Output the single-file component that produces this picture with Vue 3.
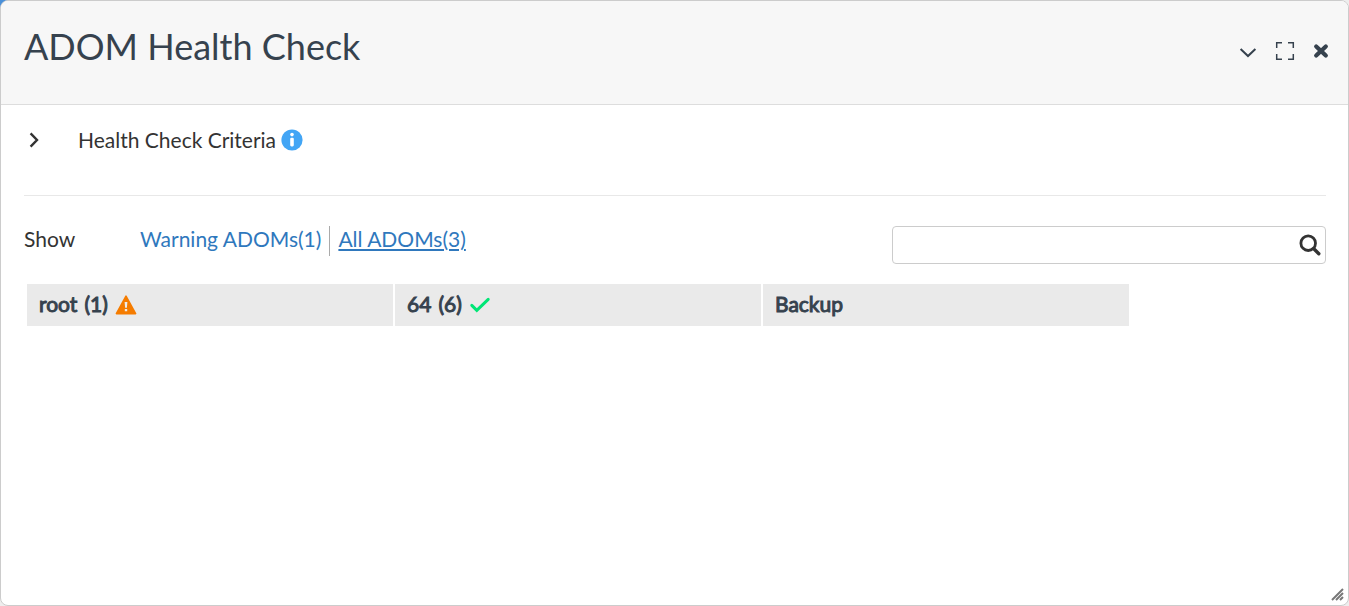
<script setup>
import { ref } from 'vue'

const query = ref('')
const adoms = [
  { name: 'root', count: 1, status: 'warning' },
  { name: '64', count: 6, status: 'ok' },
  { name: 'Backup', count: null, status: null },
]
</script>

<template>
  <div class="backdrop">
    <section class="dialog" aria-labelledby="dialog-title">
      <header class="header">
        <h1 id="dialog-title" class="title">ADOM Health Check</h1>
        <div class="actions">
          <button type="button" class="icon-button" aria-label="Collapse">
            <svg width="18" height="20" viewBox="0 0 18 20" fill="none" stroke="currentColor" stroke-width="2">
              <path d="M1.600 8 9 15l7.400-7" />
            </svg>
          </button>
          <button type="button" class="icon-button" aria-label="Full screen">
            <svg width="20" height="20" viewBox="0 0 20 20" fill="none" stroke="currentColor" stroke-width="1.500">
              <path d="M1.700 7V1.700H7M13 1.700h5.300V7M18.300 13v5.300H13M7 18.300H1.700V13" />
            </svg>
          </button>
          <button type="button" class="icon-button" aria-label="Close">
            <svg width="16" height="16" viewBox="0 0 16 16" fill="none" stroke="currentColor" stroke-width="4.200" stroke-linecap="round">
              <path d="m3.200 3.400 9.600 9.200M12.800 3.400l-9.600 9.200" />
            </svg>
          </button>
        </div>
      </header>

      <div class="body">
        <div class="criteria">
          <button type="button" class="icon-button expander" aria-label="Expand health check criteria">
            <svg width="12" height="16" viewBox="0 0 12 16" fill="none" stroke="currentColor" stroke-width="2.400">
              <path d="M1.600 1.400 8 8l-6.400 6.600" />
            </svg>
          </button>
          <span>Health Check Criteria</span>
          <svg class="info" width="22" height="22" viewBox="0 0 22 22" role="img" aria-label="Information">
            <circle cx="11" cy="11" r="10.600" fill="#42a5f5" />
            <circle cx="11" cy="5.600" r="1.800" fill="#fff" />
            <rect x="9.200" y="8.800" width="3.600" height="8.600" rx="1.300" fill="#fff" />
          </svg>
        </div>

        <div class="toolbar">
          <span class="show">Show</span>
          <nav class="filters" aria-label="ADOM filter">
            <a href="#warning" class="filter">Warning ADOMs(1)</a>
            <a href="#all" class="filter active" aria-current="true">All ADOMs(3)</a>
          </nav>
          <div class="search">
            <input v-model="query" class="search-input" type="text" aria-label="Search ADOMs" />
            <button type="button" class="icon-button" aria-label="Search">
              <svg width="22" height="22" viewBox="0 0 22 22" fill="none" stroke="currentColor">
                <circle cx="9.200" cy="9.200" r="7.300" stroke-width="2.800" />
                <path d="m14.800 14.800 5 5" stroke-width="3.400" stroke-linecap="round" />
              </svg>
            </button>
          </div>
        </div>

        <ul class="adoms">
          <li v-for="adom in adoms" :key="adom.name" class="adom">
            <span class="label">{{ adom.name }}</span>
            <span v-if="adom.count" class="label">({{ adom.count }})</span>
            <svg v-if="adom.status === 'warning'" width="22" height="20" viewBox="0 0 22 20" role="img" aria-label="Warning">
              <path d="M11 1.200 20.600 18.600H1.400Z" fill="#f57c00" stroke="#f57c00" stroke-width="1.600" stroke-linejoin="round" />
              <path d="M9.600 7h2.800l-.5 5.800h-1.800ZM9.800 14h2.400v2.200H9.800Z" fill="#ececec" />
            </svg>
            <svg v-else-if="adom.status === 'ok'" width="22" height="20" viewBox="0 0 22 20" fill="none" role="img" aria-label="OK">
              <path d="m2.800 10.400 5 5L19.200 4.400" stroke="#00e676" stroke-width="3" stroke-linecap="round" />
            </svg>
          </li>
        </ul>
      </div>

      <svg class="resize" width="13" height="13" viewBox="0 0 13 13" fill="none" stroke="#777" stroke-width="2" aria-hidden="true">
        <path d="M1 12 12 1M5 12l7-7M9 12l3-3" />
      </svg>
    </section>
  </div>
</template>

<style>
body {
  margin: 0;
}
</style>

<style scoped>
.backdrop {
  background: linear-gradient(to right, #4a90d9 16px, #eee 16px) top / 100% 16px no-repeat #eee;
}

.dialog {
  position: relative;
  box-sizing: border-box;
  min-height: 100vh;
  overflow: hidden;
  border: 1px solid #ccc;
  border-radius: 8px;
  background: #fff;
  color: #333;
  font: 21px/30px Lato, "Liberation Sans", sans-serif;
}

.header {
  display: flex;
  justify-content: space-between;
  align-items: center;
  box-sizing: border-box;
  min-height: 104px;
  padding: 0 19px 4px 23px;
  border-bottom: 1px solid #ddd;
  background: #f7f7f7;
  color: #36424e;
}

.title {
  margin: 0;
  padding-bottom: 10px;
  font-size: 36px;
  font-weight: 400;
  line-height: 44px;
}

.actions {
  display: flex;
  align-items: center;
  gap: 18px;
}

.icon-button {
  display: flex;
  padding: 0;
  border: 0;
  background: none;
  color: inherit;
  cursor: pointer;
}

.body {
  padding: 20px 22px 24px 23px;
}

.criteria {
  display: flex;
  align-items: center;
  padding-bottom: 40px;
  border-bottom: 1px solid #e8e8e8;
}

.expander {
  width: 49px;
  margin-left: 5px;
}

.info {
  margin-left: 5px;
}

.toolbar {
  display: flex;
  align-items: flex-start;
  margin-top: 30px;
  line-height: 26px;
}

.show {
  width: 116px;
}

.filters {
  display: flex;
}

.filter {
  padding-bottom: 4px;
  color: #2f78bd;
  text-decoration: none;
}

.filter + .filter {
  margin-left: 8px;
  padding-left: 8px;
  border-left: 1px solid #aaa;
}

.filter.active {
  text-decoration: underline;
}

.search {
  display: flex;
  align-items: center;
  box-sizing: border-box;
  width: 434px;
  height: 38px;
  margin-left: auto;
  padding: 0 4px 0 12px;
  border: 1px solid #ccc;
  border-radius: 4px;
}

.search-input {
  flex: 1;
  min-width: 0;
  padding: 0;
  border: 0;
  outline: 0;
  background: none;
  color: inherit;
  font: inherit;
}

.adoms {
  display: flex;
  flex-wrap: wrap;
  gap: 2px;
  margin: 20px 3px 0;
  padding: 0;
  list-style: none;
}

.adom {
  display: flex;
  align-items: center;
  gap: 7px;
  box-sizing: border-box;
  width: 366px;
  height: 42px;
  padding: 0 12px;
  background: #eaeaea;
  color: #36424e;
}

.label {
  padding-bottom: 2px;
  -webkit-text-stroke: 1px currentColor;
}

.resize {
  position: absolute;
  right: 4px;
  bottom: 4px;
}
</style>
